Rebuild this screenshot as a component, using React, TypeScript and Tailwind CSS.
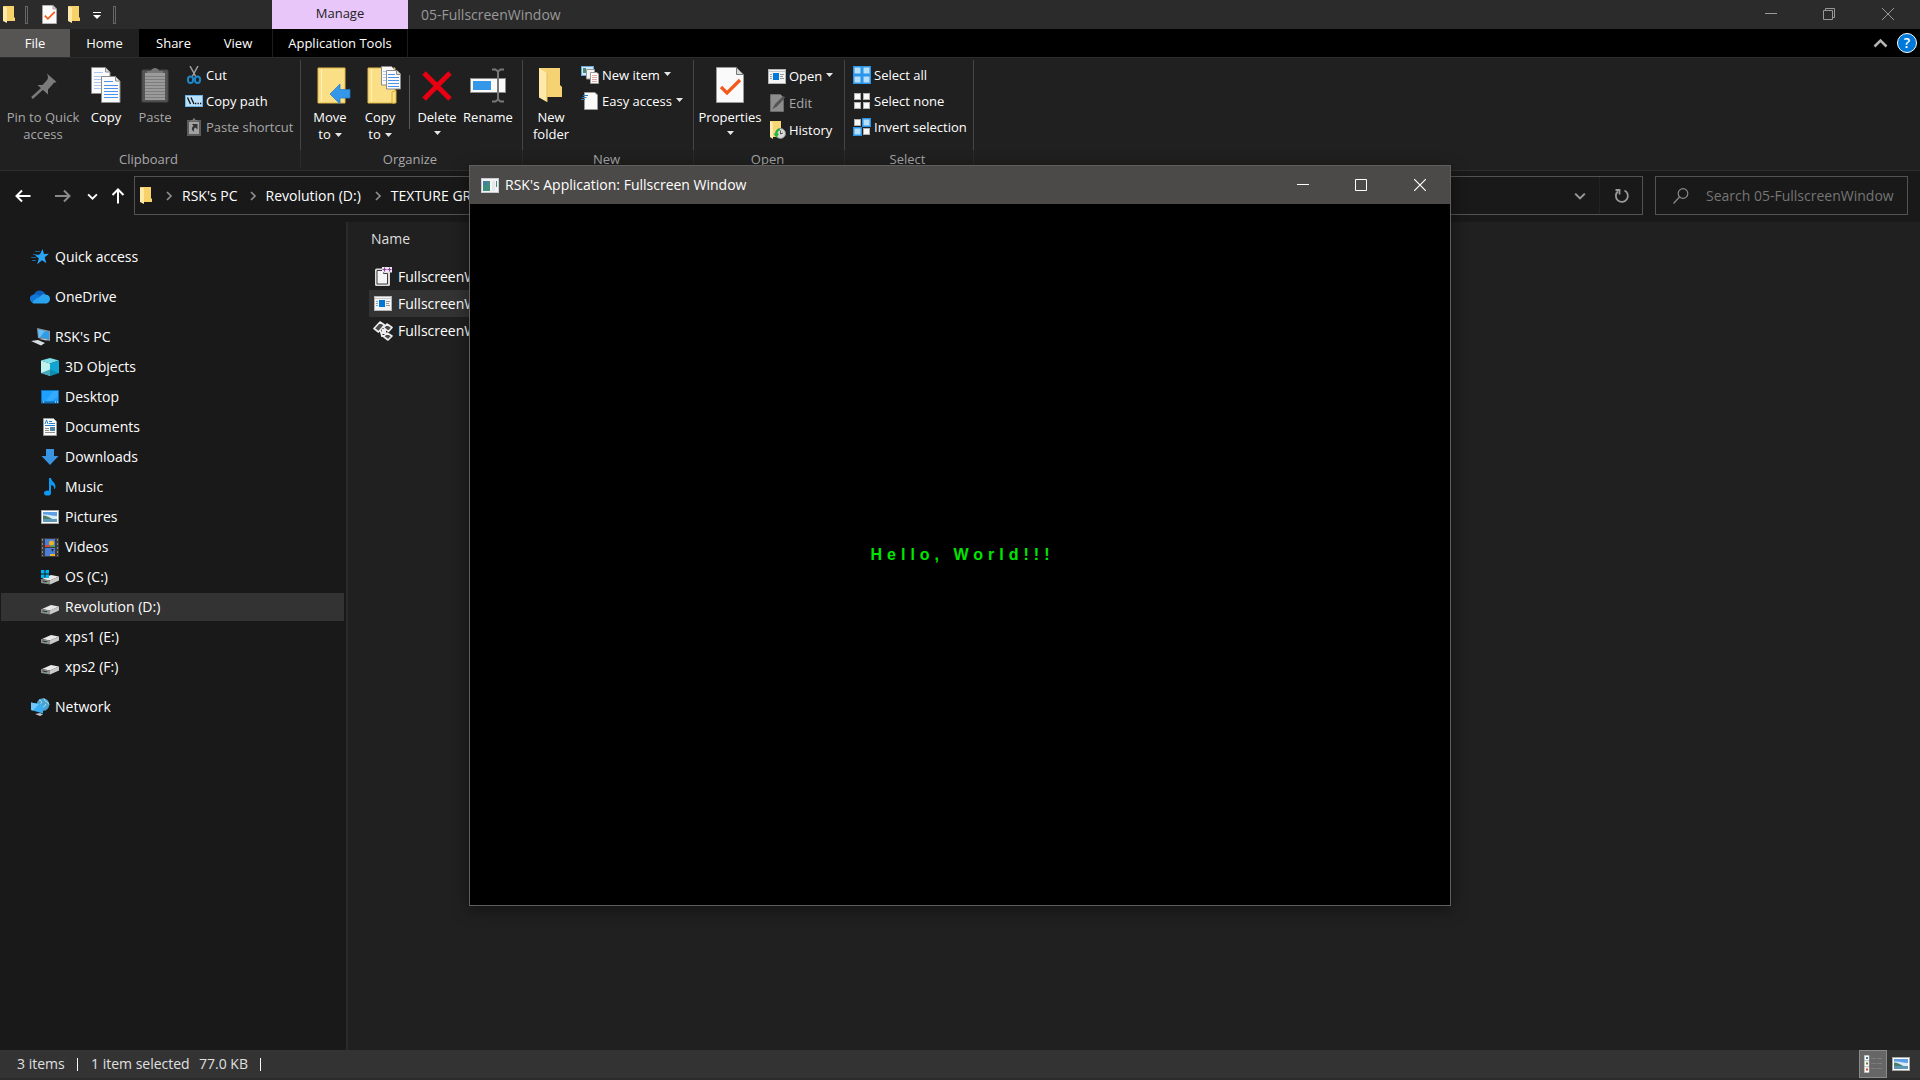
import React from "react";

/* ---------- folder and document drawings ---------- */

const SmallFolder = () => (
  <svg width="13" height="19" viewBox="0 0 13 19" aria-hidden="true">
    <path d="M1 1h10v11l1 1v3H1z" fill="#f7d26b" />
    <path d="M0 1l4 1.5V18l-4-2z" fill="#ffe9a6" />
  </svg>
);

const CheckDoc = ({ w = 15, h = 19 }: { w?: number; h?: number }) => (
  <svg width={w} height={h} viewBox="0 0 28 36" aria-hidden="true">
    <path d="M.5.5h20l7 7v28H.5z" fill="#fafafa" stroke="#9a9a9a" />
    <path d="M20.5.5v7h7z" fill="#d8d8d8" stroke="#777" />
    <path d="M5 20l6 6 13-13" fill="none" stroke="#f4581a" strokeWidth="3.2" />
  </svg>
);

const Caret = () => (
  <svg width="7" height="4" viewBox="0 0 7 4" className="inline-block" aria-hidden="true">
    <path d="M0 0h7L3.5 4z" fill="#e6e6e6" />
  </svg>
);

const Page = ({ x, y, c }: { x: number; y: number; c: string }) => (
  <g transform={`translate(${x} ${y})`}>
    <path d="M.5.5h14l4.5 4.500V26.500H.5z" fill="#fbfbfb" stroke="#8c8c8c" />
    <path d="M14.500.5V5H19z" fill="#ddd" stroke="#8c8c8c" />
    <path d="M3 5.500h9M3 9.500h14M3 12.500h14M3 15.500h14M3 18.500h14M3 21.500h14" stroke={c} />
  </g>
);

/* ---------- large ribbon icons ---------- */

const PinIcon = () => (
  <svg className="ml-1" width="36" height="36" viewBox="0 0 36 36" aria-hidden="true">
    <path d="M20 6.500l9.500 8.500-3 1-.5 1-5 5.500v5L10.500 18h5l5-5.500.5-2.500z" fill="#7b7b7b" />
    <path d="M5 31l11-10" stroke="#7b7b7b" strokeWidth="2.500" />
  </svg>
);
const CopyIcon = () => (
  <svg width="30" height="36" viewBox="0 0 30 36" aria-hidden="true">
    <Page x={0} y={0} c="#a9c8f2" />
    <Page x={10} y={9} c="#4b93ea" />
  </svg>
);
const PasteIcon = () => (
  <svg width="28" height="36" viewBox="0 0 28 36" aria-hidden="true">
    <rect x="1" y="3" width="26" height="32" rx="1" fill="#555" stroke="#474747" />
    <rect x="4" y="6" width="20" height="27" fill="#9b9b9b" />
    <path d="M4 9.500h20M4 12.500h20M4 15.500h20M4 18.500h20M4 21.500h20M4 24.500h20M4 27.500h20M4 30.500h20" stroke="#7d7d7d" />
    <path d="M6 6V4h4c1-4 7-4 8 0h4v2z" fill="#777" />
  </svg>
);
const MoveIcon = () => (
  <svg className="ml-2" width="34" height="38" viewBox="0 0 34 38" aria-hidden="true">
    <path d="M1 2h27v35H1z" fill="#fbdf87" stroke="#e0b848" />
    <path d="M4.500 3v33" stroke="#fff0b8" />
    <path d="M13 28l10-10v5.500h10v8.500H23v6z" fill="#3497e8" stroke="#2379c4" strokeWidth=".7" />
  </svg>
);
const CopyToIcon = () => (
  <svg className="ml-2" width="34" height="38" viewBox="0 0 34 38" aria-hidden="true">
    <path d="M1 2h27v35H1z" fill="#fbdf87" stroke="#e0b848" />
    <path d="M4.500 3v33" stroke="#fff0b8" />
    <path d="M25 37V26l4-1.500V37z" fill="#fbdf87" stroke="#d9ae38" />
    <path d="M14.500.500h10l3 3V19h-13z" fill="#fafafa" stroke="#8c8c8c" />
    <path d="M16 5.500h4M16 8.500h4M16 11.500h4M16 14.500h4" stroke="#a9c8f2" />
    <path d="M19.500 4.500H30l3.500 3.500v15h-14z" fill="#fafafa" stroke="#8c8c8c" />
    <path d="M29.500 4.500v4h4" fill="#ddd" stroke="#8c8c8c" />
    <path d="M21 8.500h7M21 11.500h11M21 14.500h11M21 17.500h11M21 20.500h11" stroke="#4b93ea" />
  </svg>
);
const DeleteIcon = () => (
  <svg width="30" height="34" viewBox="0 0 30 34" aria-hidden="true">
    <path d="M2 5l26 26M28 5L2 31" stroke="#e60012" strokeWidth="5" />
  </svg>
);
const RenameIcon = () => (
  <svg width="36" height="36" viewBox="0 0 36 36" aria-hidden="true">
    <rect x=".5" y="11.500" width="35" height="14" fill="#fafafa" stroke="#8a8a8a" />
    <rect x="3" y="14" width="18" height="9" fill="#3497e8" />
    <path d="M22 2.500h3.500l2.500 2 2.500-2H34M28 4v29M22 34.500h3.500l2.500-2 2.500 2H34" fill="none" stroke="#777" strokeWidth="2" />
  </svg>
);
const NewFolderIcon = () => (
  <svg width="24" height="36" viewBox="0 0 24 36" aria-hidden="true">
    <path d="M0 1h21v17l2 2v10H0z" fill="#f5d273" />
    <path d="M0 1l8 5v29l-8-4.500z" fill="#ffe9a8" />
    <path d="M8 6v29" stroke="#e6bd57" />
  </svg>
);

/* ---------- small ribbon icons ---------- */

const CutIcon = () => (
  <svg width="18" height="18" viewBox="0 0 18 18" aria-hidden="true">
    <path d="M5 0l6 11M13 0L7 11" stroke="#a0a0a0" strokeWidth="1.500" />
    <ellipse cx="5.500" cy="13.800" rx="2.600" ry="3.200" fill="none" stroke="#1e86c8" strokeWidth="2" />
    <ellipse cx="12.500" cy="13.800" rx="2.600" ry="3.200" fill="none" stroke="#1e86c8" strokeWidth="2" />
  </svg>
);
const CopyPathIcon = () => (
  <svg width="18" height="12" viewBox="0 0 18 12" aria-hidden="true">
    <rect x=".5" y=".5" width="17" height="11" fill="#b9e1fb" stroke="#6db4e4" />
    <path d="M2.500 2.500l3 6.500M6 2.500l3 6.500" stroke="#111" strokeWidth="1.300" />
    <path d="M10 8.500h1.300M12.500 8.500h1.300M15 8.500h1.300" stroke="#111" strokeWidth="1.300" />
  </svg>
);
const PasteShortcutIcon = () => (
  <svg width="18" height="18" viewBox="0 0 18 18" aria-hidden="true">
    <rect x="2" y="2" width="14" height="16" fill="#5c5c5c" />
    <rect x="4" y="4" width="10" height="12" fill="#a2a2a2" />
    <path d="M5.500 3.500V2h2c.5-2.300 2.500-2.300 3 0h2v1.500z" fill="#777" />
    <path d="M7 6h5.500v5.500l-2-2c-1.800 1-2 2.500-1.500 4.500-3-2.500-2.500-4.500-.5-6z" fill="#333" />
  </svg>
);
const NewItemIcon = () => (
  <svg width="18" height="18" viewBox="0 0 18 18" aria-hidden="true">
    <rect x=".5" y=".5" width="12" height="9" fill="#cfe9fa" stroke="#6aa9d4" />
    <path d="M2 2h3v5H2z" fill="#4a8a7a" />
    <path d="M5.500 3.500h8V13h-8z" fill="#f3f3f3" stroke="#999" />
    <path d="M9.500 6.500H16l1.500 1.500v9.500h-8z" fill="#fff" stroke="#999" />
    <path d="M11 9.500h5M11 11.500h5M11 13.500h5M11 15.500h5" stroke="#e3a3a3" />
  </svg>
);
const EasyAccessIcon = () => (
  <svg width="18" height="18" viewBox="0 0 18 18" aria-hidden="true">
    <path d="M3.500.5H14l2.500 2.500v14.500h-13z" fill="#fafafa" stroke="#999" />
    <path d="M2 3.500h5M1 5.500h4.500M0 7.500h4" stroke="#2c79bd" strokeWidth="1.200" />
  </svg>
);
const AppIcon = () => (
  <svg width="18" height="15" viewBox="0 0 18 15" aria-hidden="true">
    <rect x=".5" y=".5" width="17" height="14" fill="#f4f4f4" stroke="#b4b4b4" />
    <path d="M1 2.500h16" stroke="#c8c8c8" />
    <path d="M2 5.500h2M2 7.500h2M2 9.500h2M12 5.500h4M12 7.500h3M12 9.500h4" stroke="#9a9a9a" />
    <rect x="5" y="4" width="6" height="7" fill="#0078d7" />
  </svg>
);
const EditIcon = () => (
  <svg width="18" height="18" viewBox="0 0 18 18" aria-hidden="true">
    <path d="M2.500.5h10l3 3v14h-13z" fill="#8d8d8d" stroke="#6b6b6b" />
    <path d="M17 3.500L9 12l-4 2.500L7.500 10l8-8z" fill="#555" stroke="#444" strokeWidth=".5" />
  </svg>
);
const HistoryIcon = () => (
  <svg width="18" height="18" viewBox="0 0 18 18" aria-hidden="true">
    <path d="M2 0h11v16H2z" fill="#f7d674" />
    <path d="M2 0l3 2v16l-3-2z" fill="#ffebae" />
    <circle cx="12.500" cy="12.500" r="5" fill="#dadada" stroke="#888" />
    <path d="M12.500 9.500v3.500l2.500-1" stroke="#555" fill="none" />
    <path d="M12 7.500c-3 0-4.500 2-4.500 5H5.500L8.500 17l2.500-4.500H9.500c0-1.500 1-3 2.500-3z" fill="#23b53a" />
  </svg>
);

const Tiles = ({ on }: { on: [boolean, boolean, boolean, boolean] }) => (
  <svg width="18" height="18" viewBox="0 0 18 18" aria-hidden="true">
    {on.map((sel, i) => {
      const x = (i % 2) * 9;
      const y = i > 1 ? 9 : 0;
      return sel ? (
        <rect key={i} x={x + 0.75} y={y + 0.75} width="7.500" height="7.500" fill="#b7defa" stroke="#2b95ea" strokeWidth="1.500" />
      ) : (
        <rect key={i} x={x + 1.5} y={y + 1.5} width="6" height="6" fill="#fafafa" stroke="#b0b0b0" />
      );
    })}
  </svg>
);

/* ---------- navigation pane icons ---------- */

const StarIcon = () => (
  <svg width="18" height="16" viewBox="0 0 18 16" aria-hidden="true">
    <path d="M11.500 0l1.500 5 5-.2-4.300 3.400 1.600 6-4.300-3-4.800 4 1.600-6L4 6.500l5-1.300z" fill="#2aa4f4" />
    <path d="M4 2.500h5M2 5.500h4M0 8.500h5M1 11.500h4" stroke="#1b6aa5" strokeWidth=".9" />
  </svg>
);
const CloudIcon = () => (
  <svg width="20" height="14" viewBox="0 0 20 14" aria-hidden="true">
    <path d="M4.500 12C1.500 12 0 10.500 0 8.500S1.700 4.700 4 4.500C5 1.500 7.500.3 10 .5c2.800.2 4.700 1.800 5.500 4L8 11z" fill="#0f5fbd" />
    <path d="M4 4.500c2-.5 4 0 6 1.500L3 13C1 12.500 0 10.500 0 8.500S2 4.700 4 4.500z" fill="#1177d8" />
    <path d="M10 6.500c2-2.500 4.500-2.500 6.500-1.700C19 5 20 7 20 9s-1.500 4.500-4 4.500H3.500C1.700 13 3 11 4.500 10z" fill="#2aa3ee" />
  </svg>
);
const PcIcon = () => (
  <svg width="19" height="18" viewBox="0 0 19 18" aria-hidden="true">
    <path d="M6 0l13 3v10L7 10z" fill="#8b97a3" />
    <path d="M7 1.500L18 4v7.500L8 9z" fill="#2d9de8" />
    <path d="M7 1.500L14 3 9 9.300 8 9z" fill="#67bdf5" />
    <path d="M0 13l7-1 7 3-4 2.500z" fill="#d7dce0" />
    <path d="M8 11l7 1.500 2-.5-2-1z" fill="#b9c0c6" />
  </svg>
);
const CubeIcon = () => (
  <svg width="18" height="18" viewBox="0 0 18 18" aria-hidden="true">
    <path d="M0 2.500L9 0l9 2.500L9 5.500z" fill="#7be0ea" />
    <path d="M0 2.500l9 3V18l-9-3z" fill="#bdf1f0" />
    <path d="M18 2.500l-9 3V18l9-3z" fill="#10a5d3" />
    <path d="M0 15l9-3.500L18 15l-9 3z" fill="#0a7f9c" opacity=".65" />
  </svg>
);
const DesktopIcon = () => (
  <svg width="18" height="14" viewBox="0 0 18 14" aria-hidden="true">
    <rect x=".5" y=".5" width="17" height="12.500" fill="#1ea0ff" stroke="#0e6fb9" />
    <path d="M12 1h5v5L9 12H4z" fill="#4ab5ff" opacity=".5" />
    <path d="M1 12h16" stroke="#0b5a98" />
    <path d="M2 12h1M14 12h1M16 12h1" stroke="#fff" />
  </svg>
);
const DocumentsIcon = () => (
  <svg width="18" height="18" viewBox="0 0 18 18" aria-hidden="true">
    <path d="M2.500.5h10l3 3v14h-13z" fill="#fafafa" stroke="#9a9a9a" />
    <path d="M4 6l1.500-4L7 6M8 3.500h3M8 5.500h6M4 7.500h10" stroke="#2380d0" fill="none" />
    <path d="M4 10.500h4M4 12.500h4M4 14.500h10" stroke="#8e8e8e" />
    <rect x="9" y="9" width="5" height="4" fill="#4f86a8" />
  </svg>
);
const DownloadIcon = () => (
  <svg width="18" height="18" viewBox="0 0 18 18" aria-hidden="true">
    <path d="M5 1h8v7h4.500L9 17 .5 8H5z" fill="#3a94e4" />
  </svg>
);
const MusicIcon = () => (
  <svg width="18" height="18" viewBox="0 0 18 18" aria-hidden="true">
    <ellipse cx="6.500" cy="15" rx="3.500" ry="2.600" fill="#0d99f2" />
    <path d="M8 0h2c.5 3.500 4.500 4.500 4.500 8.500 0 1-.3 2-1.300 3 .2-3-1-4-3.200-4.500V15H8z" fill="#0d99f2" />
  </svg>
);
const PictureIcon = () => (
  <svg width="18" height="14" viewBox="0 0 18 14" aria-hidden="true">
    <rect x=".5" y=".5" width="17" height="13" fill="#fff" stroke="#a8a8a8" />
    <rect x="2" y="2" width="14" height="10" fill="#5f9fe6" />
    <path d="M2 4.500c5-.5 8 1 14 1.500V9H2z" fill="#d9ecf8" />
    <path d="M2 5.500c3 0 7 2 10 4H2z" fill="#4a7f6c" />
    <path d="M2 9h14v3H2z" fill="#5e97b4" />
  </svg>
);
const VideoIcon = () => (
  <svg width="18" height="19" viewBox="0 0 18 19" aria-hidden="true">
    <rect width="18" height="19" fill="#3a3a3a" />
    <path d="M1.500 1v17M16.500 1v17" stroke="#8b8b8b" strokeDasharray="2 2" />
    <path d="M4 1h10v8H4zM4 10h10v8H4z" fill="#4a7fd9" />
    <circle cx="10.500" cy="5" r="2.600" fill="#e8b52a" />
    <path d="M4 7h5v2H4z" fill="#d34747" />
    <path d="M9 7.500h5V9H9z" fill="#3f9d4c" />
    <path d="M10 11h3l-1.500 3z" fill="#2c2f3f" />
    <path d="M9 16h5v2H9z" fill="#e8b52a" />
  </svg>
);
const DriveShape = () => (
  <>
    <path d="M1 11l9-4 8 1.500-9 4z" fill="#e9e9e9" />
    <path d="M0 11l9 1.500v4L0 15z" fill="#8d8d8d" />
    <path d="M9 12.500l9-4v4l-9 4z" fill="#c9c9c9" />
    <path d="M1.500 13l5 .9" stroke="#2e2e2e" />
    <path d="M6 14.300h1.500" stroke="#49d36d" />
  </>
);
const DriveIcon = () => (
  <svg width="18" height="18" viewBox="0 0 18 18" aria-hidden="true">
    <DriveShape />
  </svg>
);
const OsDriveIcon = () => (
  <svg width="18" height="18" viewBox="0 0 18 18" aria-hidden="true">
    <DriveShape />
    <path d="M0 2h3.500v3.500H0zM4.500 2H8v3.500H4.500zM0 6.500h3.500V10H0zM4.500 6.500H8V10H4.500z" fill="#00b6f0" />
  </svg>
);
const NetworkIcon = () => (
  <svg width="19" height="18" viewBox="0 0 19 18" aria-hidden="true">
    <circle cx="12" cy="6.500" r="6.300" fill="#4ca3cf" />
    <path d="M8 2c3 0 3 3 1.500 4M13 .5c0 3 4 3 5 6M10 12c0-3 4-3 5-6" stroke="#b9e4f5" fill="none" />
    <path d="M0 4.500l12 2.500v8.500L0 12z" fill="#3aaef5" />
    <path d="M0 4.500L8 6 2 12.500 0 12z" fill="#71c8fb" />
    <path d="M4 16l5-1 3 1.500-3 1.500z" fill="#b9c6cf" />
  </svg>
);

/* ---------- file icons ---------- */

const CppIcon = () => (
  <svg width="20" height="20" viewBox="0 0 20 20" aria-hidden="true">
    <rect x="2" y="1.500" width="15" height="17.500" rx="1.500" fill="#dcdcdc" />
    <path d="M4 3.500h6.500v3h4V17H4z" fill="#f4f4f4" stroke="#3c3c3c" />
    <path d="M9 0h10v5.500H9z" fill="#ece4f0" />
    <path d="M9.500 2.500h4M11.500.5v4M14.500 2.500h4M16.500.5v4" stroke="#8d3d9c" />
  </svg>
);
const ObjIcon = () => (
  <svg width="20" height="20" viewBox="0 0 20 20" aria-hidden="true">
    <path d="M7 8l2 7h4" stroke="#efefef" strokeWidth="1.800" fill="none" />
    <g fill="#4b4b4b" stroke="#efefef" strokeWidth="1.600" strokeLinejoin="round">
      <path d="M1 7.500L7 1l4.500 3L5.500 11z" />
      <path d="M10.500 6.500L14 3l5 3.500-3.500 4z" />
      <path d="M10.500 15.500L14 12l5 3-4 4z" />
    </g>
    <path d="M9 8h4v5H9z" fill="#efefef" />
  </svg>
);

const Chevron = ({ dir, color, size = 10 }: { dir: "right" | "down" | "up"; color: string; size?: number }) => (
  <svg width={size} height={size} viewBox="0 0 10 10" aria-hidden="true">
    <path
      d={dir === "right" ? "M3 1l4 4-4 4" : dir === "down" ? "M1 3l4 4 4-4" : "M1 7l4-4 4 4"}
      fill="none"
      stroke={color}
      strokeWidth="1.700"
    />
  </svg>
);

/* ---------- ribbon parts ---------- */

function Big({ icon, lines, caret, dim, width }: { icon: React.ReactNode; lines: string[]; caret?: boolean; dim?: boolean; width: string }) {
  return (
    <button className={`${width} flex shrink-0 flex-col items-center text-center ${dim ? "text-[#a8a8a8]" : "text-white"}`}>
      <span className="flex h-[49px] items-center justify-center">{icon}</span>
      <span className="flex flex-col items-center whitespace-nowrap">
        {lines.map((l, i) => (
          <span key={l}>
            {l}
            {caret && i === lines.length - 1 && lines.length > 1 && (
              <span className="mb-1 ml-1 inline-block align-middle leading-none">
                <Caret />
              </span>
            )}
          </span>
        ))}
        {caret && lines.length === 1 && (
          <span className="flex h-3.5 items-center">
            <Caret />
          </span>
        )}
      </span>
    </button>
  );
}

function Small({ icon, label, caret, dim }: { icon: React.ReactNode; label: string; caret?: boolean; dim?: boolean }) {
  return (
    <button className={`flex h-[26px] items-center whitespace-nowrap ${dim ? "text-[#a8a8a8]" : "text-white"}`}>
      <span className="mr-[3px] flex w-[18px] justify-center">{icon}</span>
      {label}
      {caret && (
        <span className="mb-1 ml-1 leading-none">
          <Caret />
        </span>
      )}
    </button>
  );
}

function Group({ name, width, children }: { name: string; width: string; children: React.ReactNode }) {
  return (
    <section aria-label={name} className={`${width} flex shrink-0 flex-col`}>
      <div className="mt-0.5 flex h-[90px] border-r border-[#454545]">{children}</div>
      <div className="h-[18px] border-r border-[#2b2b2b] pr-[3px] text-center leading-[18px] text-[#a8a8a8]">{name}</div>
    </section>
  );
}

function Ribbon() {
  return (
    <div className="flex h-[114px] shrink-0 border-t border-b border-[#2d2d2d] bg-[#202020] text-[13px] leading-[17px]">
      <Group name="Clipboard" width="w-[301px]">
        <Big icon={<PinIcon />} lines={["Pin to Quick", "access"]} dim width="w-[86px]" />
        <Big icon={<CopyIcon />} lines={["Copy"]} width="w-[40px]" />
        <Big icon={<PasteIcon />} lines={["Paste"]} dim width="w-[58px]" />
        <div className="flex flex-col pt-0.5 pl-px">
          <Small icon={<CutIcon />} label="Cut" />
          <Small icon={<CopyPathIcon />} label="Copy path" />
          <Small icon={<PasteShortcutIcon />} label="Paste shortcut" dim />
        </div>
      </Group>
      <Group name="Organize" width="w-[222px]">
        <div className="flex pl-1">
          <Big icon={<MoveIcon />} lines={["Move", "to"]} caret width="w-[50px]" />
          <Big icon={<CopyToIcon />} lines={["Copy", "to"]} caret width="w-[50px]" />
        </div>
        <div className="mt-[15px] mr-[3px] ml-1 h-[54px] w-px bg-[#5a5a5a]" />
        <Big icon={<DeleteIcon />} lines={["Delete"]} caret width="w-[48px]" />
        <Big icon={<RenameIcon />} lines={["Rename"]} width="w-[54px]" />
      </Group>
      <Group name="New" width="w-[171px]">
        <Big icon={<NewFolderIcon />} lines={["New", "folder"]} width="w-[56px]" />
        <div className="flex flex-col pt-0.5 pl-0.5">
          <Small icon={<NewItemIcon />} label="New item" caret />
          <Small icon={<EasyAccessIcon />} label="Easy access" caret />
        </div>
      </Group>
      <Group name="Open" width="w-[151px]">
        <Big icon={<CheckDoc w={28} h={36} />} lines={["Properties"]} caret width="w-[72px]" />
        <div className="flex flex-col gap-px pt-[3px] pl-0.5">
          <Small icon={<AppIcon />} label="Open" caret />
          <Small icon={<EditIcon />} label="Edit" dim />
          <Small icon={<HistoryIcon />} label="History" />
        </div>
      </Group>
      <Group name="Select" width="w-[129px]">
        <div className="flex flex-col pt-0.5 pl-2">
          <Small icon={<Tiles on={[true, true, true, true]} />} label="Select all" />
          <Small icon={<Tiles on={[false, false, false, false]} />} label="Select none" />
          <Small icon={<Tiles on={[false, true, true, false]} />} label="Invert selection" />
        </div>
      </Group>
    </div>
  );
}

function TitleBar() {
  return (
    <header className="flex h-[29px] shrink-0 items-center bg-[#2b2b2b]">
      <div className="flex h-full w-[272px] items-center pl-[3px]">
        <SmallFolder />
        <span className="ml-[9px] h-[18px] w-[3px] border border-[#666]" />
        <button aria-label="Properties" className="ml-3.5">
          <CheckDoc />
        </button>
        <button aria-label="New folder" className="ml-[11px]">
          <SmallFolder />
        </button>
        <button aria-label="Customize Quick Access Toolbar" className="ml-3 pt-0.5">
          <svg width="8" height="7" viewBox="0 0 8 7" aria-hidden="true">
            <path d="M0 .5h8" stroke="#fff" />
            <path d="M0 3h8L4 7z" fill="#fff" />
          </svg>
        </button>
        <span className="ml-3 h-[18px] w-[3px] border border-[#666]" />
      </div>
      <div className="flex h-full w-[136px] items-center justify-center bg-[#e9c6f9] pb-0.5 text-[13px] text-[#222]">Manage</div>
      <h1 className="ml-[13px] flex-1 text-sm text-[#999]">05-FullscreenWindow</h1>
      <div className="flex h-full pb-px text-[#999]">
        <button aria-label="Minimize" className="flex w-[58px] items-center justify-center">
          <svg width="12" height="12" aria-hidden="true">
            <path d="M0 5.500h12" stroke="currentColor" />
          </svg>
        </button>
        <button aria-label="Restore" className="flex w-[58px] items-center justify-center">
          <svg width="12" height="12" fill="none" stroke="currentColor" aria-hidden="true">
            <path d="M.5 2.500h9v9h-9zM2.500 2.500v-2h9v9h-2" />
          </svg>
        </button>
        <button aria-label="Close" className="flex w-[60px] items-center justify-center">
          <svg width="12" height="12" stroke="currentColor" aria-hidden="true">
            <path d="M0 0l12 12M12 0L0 12" />
          </svg>
        </button>
        <span className="w-0.5" />
      </div>
    </header>
  );
}

function Tabs() {
  return (
    <nav className="flex h-7 shrink-0 bg-black text-[13px] text-white">
      <button className="w-[70px] bg-[#575553] pt-px">File</button>
      <button className="w-[69px] bg-[#202020] pt-px">Home</button>
      <button className="w-[69px] pt-px">Share</button>
      <button className="w-[64px] pt-px pr-1">View</button>
      <button className="w-[136px] border-x border-[#1c1c1c] pt-px">Application Tools</button>
      <div className="flex flex-1 items-center justify-end">
        <button aria-label="Collapse ribbon" className="mr-[9px]">
          <Chevron dir="up" color="#b4b4b4" size={15} />
        </button>
        <button aria-label="Help" className="mr-[3px] flex h-5 w-5 items-center justify-center rounded-full border border-white bg-[#0078d7] text-sm font-semibold">
          ?
        </button>
      </div>
    </nav>
  );
}

function Arrow({ d, color }: { d: string; color: string }) {
  return (
    <svg width="16" height="16" viewBox="0 0 16 16" fill="none" stroke={color} strokeWidth="2" aria-hidden="true">
      <path d={d} />
    </svg>
  );
}

function AddressRow() {
  return (
    <div className="flex h-[51px] shrink-0 bg-[#191919] pt-[5px] pr-3 text-sm text-white">
      <div className="flex h-10 w-[134px] items-center pl-[15px]">
        <button aria-label="Back">
          <Arrow d="M15.500 8H1.500M7 2.500L1.500 8 7 13.500" color="#fff" />
        </button>
        <button aria-label="Forward" className="ml-6">
          <Arrow d="M0 8h14M9 2.500L14.500 8 9 13.500" color="#8a8a8a" />
        </button>
        <button aria-label="Recent locations" className="ml-4">
          <Chevron dir="down" color="#fff" size={11} />
        </button>
        <button aria-label="Up" className="ml-3">
          <Arrow d="M8 15.500V1.500M2.500 7L8 1.500 13.500 7" color="#fff" />
        </button>
      </div>
      <div className="mr-3 flex h-[39px] flex-1 items-center border border-[#535353] pl-[5px]">
        <SmallFolder />
        <span className="ml-[11px]">
          <Chevron dir="right" color="#8e8e8e" />
        </span>
        <button className="ml-2">RSK's PC</button>
        <span className="ml-2.5">
          <Chevron dir="right" color="#8e8e8e" />
        </span>
        <button className="ml-2">Revolution (D:)</button>
        <span className="ml-3">
          <Chevron dir="right" color="#8e8e8e" />
        </span>
        <button className="ml-2">TEXTURE GRAPHICS</button>
        <button aria-label="Previous locations" className="mr-[13px] ml-auto">
          <Chevron dir="down" color="#9a9a9a" size={12} />
        </button>
        <button aria-label="Refresh" className="flex h-full w-[43px] items-center justify-center border-l border-[#232323] pl-0.5">
          <svg width="16" height="16" viewBox="0 0 16 16" fill="none" stroke="#9a9a9a" strokeWidth="1.800" aria-hidden="true">
            <path d="M10.500 2.500A6 6 0 1 1 4 3.300" />
            <path d="M1.500 2h4v4.500" />
          </svg>
        </button>
      </div>
      <label className="flex h-[39px] w-[253px] items-center border border-[#535353]">
        <svg className="ml-[17px] shrink-0" width="16" height="16" viewBox="0 0 16 16" fill="none" stroke="#8a8a8a" strokeWidth="1.200" aria-hidden="true">
          <circle cx="10" cy="5.500" r="4.800" />
          <path d="M6.500 9L.5 15.500" />
        </svg>
        <input
          type="text"
          aria-label="Search 05-FullscreenWindow"
          placeholder="Search 05-FullscreenWindow"
          className="ml-[17px] w-full min-w-0 bg-transparent outline-none placeholder:text-[#757575]"
        />
      </label>
    </div>
  );
}

type NavItem = { label: string; icon: React.ReactNode; top?: boolean; selected?: boolean };

const navItems: NavItem[] = [
  { label: "Quick access", icon: <StarIcon />, top: true },
  { label: "OneDrive", icon: <CloudIcon />, top: true },
  { label: "RSK's PC", icon: <PcIcon />, top: true },
  { label: "3D Objects", icon: <CubeIcon /> },
  { label: "Desktop", icon: <DesktopIcon /> },
  { label: "Documents", icon: <DocumentsIcon /> },
  { label: "Downloads", icon: <DownloadIcon /> },
  { label: "Music", icon: <MusicIcon /> },
  { label: "Pictures", icon: <PictureIcon /> },
  { label: "Videos", icon: <VideoIcon /> },
  { label: "OS (C:)", icon: <OsDriveIcon /> },
  { label: "Revolution (D:)", icon: <DriveIcon />, selected: true },
  { label: "xps1 (E:)", icon: <DriveIcon /> },
  { label: "xps2 (F:)", icon: <DriveIcon /> },
  { label: "Network", icon: <NetworkIcon />, top: true },
];

function NavPane() {
  return (
    <aside className="w-[348px] shrink-0 border-r-2 border-[#2b2b2b] bg-[#191919] pt-[9px] pr-0.5 pl-px text-sm text-white">
      <ul>
        {navItems.map((n) => (
          <li key={n.label} className={n.top ? "mt-3 mb-0.5" : "mb-0.5"}>
            <button className={`flex h-7 w-full items-center ${n.top ? "pl-[29px]" : "pl-[39px]"} ${n.selected ? "bg-[#333333]" : ""}`}>
              <span className="mr-[5px] flex w-5 justify-center">{n.icon}</span>
              {n.label}
            </button>
          </li>
        ))}
      </ul>
    </aside>
  );
}

const files = [
  { name: "FullscreenWindow.cpp", icon: <CppIcon /> },
  { name: "FullscreenWindow.exe", icon: <AppIcon />, selected: true },
  { name: "FullscreenWindow.obj", icon: <ObjIcon /> },
];

function FileList() {
  return (
    <main className="flex-1 bg-[#202020] pt-[3px] pl-[21px] text-sm text-white">
      <table className="w-[480px] border-collapse">
        <thead>
          <tr>
            <th className="h-[38px] pl-0.5 text-left align-top font-normal leading-7 text-[#dedede]">Name</th>
          </tr>
        </thead>
        <tbody>
          {files.map((f) => (
            <tr key={f.name} className={f.selected ? "bg-[#333333]" : ""}>
              <td className="h-[27px] p-0 leading-none">
                <span className="flex items-center pl-1">
                  <span className="mr-[5px] flex w-5 justify-center">{f.icon}</span>
                  {f.name}
                </span>
              </td>
            </tr>
          ))}
        </tbody>
      </table>
    </main>
  );
}

function StatusBar() {
  return (
    <footer className="flex h-[30px] shrink-0 items-center border-b-2 border-[#2b2b2b] bg-[#333333] pl-[17px] text-sm text-[#e0e0e0]">
      <span className="w-[60px]">3 items</span>
      <span className="h-[13px] w-px bg-white" />
      <span className="ml-[13px] w-[108px] whitespace-nowrap">1 item selected</span>
      <span className="w-[61px] whitespace-nowrap">77.0 KB</span>
      <span className="h-[13px] w-px bg-white" />
      <button aria-label="Details view" className="ml-auto flex h-7 w-7 items-center justify-center border border-[#8a8a8a] bg-[#666666]">
        <svg width="18" height="18" viewBox="0 0 18 18" aria-hidden="true">
          <path d="M.5.5H5v5H.5zM.5 6H5v5.500H.5zM.5 12H5v5.500H.5z" fill="#fff" stroke="#ccc" strokeWidth=".6" />
          <path d="M2 2h2v2H2z" fill="#3e7f8c" />
          <path d="M2 7.500h2v2H2z" fill="#5a7d36" />
          <path d="M2 13.500h2v2H2z" fill="#c5462f" />
          <path d="M7 3.500h5M13 3.500h5M7 8.500h5M13 8.500h5M7 13.500h5M13 13.500h5" stroke="#7c7c7c" />
        </svg>
      </button>
      <button aria-label="Thumbnail view" className="mr-[10px] ml-[5px]">
        <PictureIcon />
      </button>
    </footer>
  );
}

function AppWindow() {
  return (
    <div
      role="dialog"
      aria-label="RSK's Application: Fullscreen Window"
      className="absolute top-[165px] left-[469px] flex h-[741px] w-[982px] flex-col border border-[#5f5e5c] bg-black shadow-[0_4px_16px_rgba(0,0,0,0.45)]"
    >
      <div className="flex h-[38px] shrink-0 items-center bg-[#4c4a48] pl-[11px] text-sm text-white">
        <svg width="18" height="15" viewBox="0 0 18 15" aria-hidden="true">
          <rect x=".5" y=".5" width="17" height="14" fill="#f4f4f4" stroke="#c8ccd0" />
          <path d="M2 3h7v10H2z" fill="#3f8f7c" />
          <path d="M2 3h4v4H2z" fill="#4b78a8" />
          <path d="M11 3h3v10h-3z" fill="#e4e8e8" />
          <path d="M15 3h1v6h-1z" fill="#3f8f7c" />
        </svg>
        <h2 className="ml-1.5 flex-1">RSK's Application: Fullscreen Window</h2>
        <button aria-label="Minimize" className="flex h-full w-[58px] items-center justify-center">
          <svg width="12" height="12" aria-hidden="true">
            <path d="M0 5.500h12" stroke="#fff" />
          </svg>
        </button>
        <button aria-label="Maximize" className="flex h-full w-[58px] items-center justify-center">
          <svg width="12" height="12" aria-hidden="true">
            <path d="M.5.5h11v11H.5z" stroke="#fff" fill="none" />
          </svg>
        </button>
        <button aria-label="Close" className="flex h-full w-[60px] items-center justify-center">
          <svg width="12" height="12" aria-hidden="true">
            <path d="M0 0l12 12M12 0L0 12" stroke="#fff" strokeWidth="1.200" />
          </svg>
        </button>
      </div>
      <p className="flex flex-1 items-center justify-center pl-[5px] font-['Liberation_Sans',Arial,sans-serif] text-base font-bold tracking-[5px] text-[#00e600]">
        Hello, World!!!
      </p>
    </div>
  );
}

export default function App() {
  return (
    <div className="relative flex h-screen w-full flex-col overflow-hidden bg-[#202020] font-['Open_Sans','Noto_Sans',sans-serif]">
      <TitleBar />
      <Tabs />
      <Ribbon />
      <AddressRow />
      <div className="flex min-h-0 flex-1">
        <NavPane />
        <FileList />
      </div>
      <StatusBar />
      <AppWindow />
    </div>
  );
}
